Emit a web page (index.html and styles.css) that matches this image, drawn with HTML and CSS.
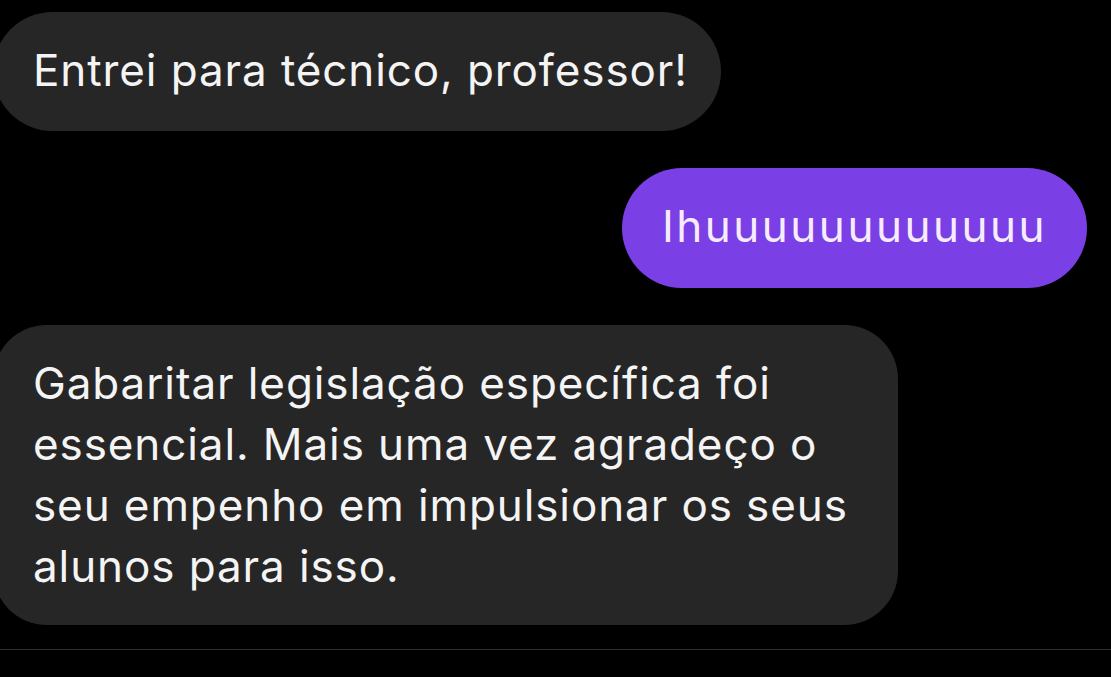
FILE: index.html
```html
<!DOCTYPE html>
<html lang="pt">
<head>
<meta charset="utf-8">
<link rel="stylesheet" href="styles.css">
</head>
<body>
<div class="chat">
  <div class="row in">
    <div class="bubble grey single">Entrei para técnico, professor!</div>
  </div>
  <div class="row out">
    <div class="bubble purple">Ihuuuuuuuuuuuu</div>
  </div>
  <div class="row in">
    <div class="bubble grey multi">Gabaritar legislação específica foi<br>essencial. Mais uma vez agradeço o<br>seu empenho em impulsionar os seus<br>alunos para isso.</div>
  </div>
</div>
<div class="divider"></div>
</body>
</html>
```

FILE: styles.css
```css
html, body {
  margin: 0;
  padding: 0;
  background: #000;
  height: 100%;
  overflow: hidden;
}
body {
  font-family: Inter, "Noto Sans", sans-serif;
  color: #f4f4f4;
}
.chat {
  display: flex;
  flex-direction: column;
  padding-top: 12px;
  gap: 37px;
}
.row {
  display: flex;
}
.row.in {
  justify-content: flex-start;
  margin-left: -7px;
}
.row.out {
  justify-content: flex-end;
  padding-right: 24px;
}
.bubble {
  font-size: 44px;
  letter-spacing: 0.9px;
  line-height: 61px;
  box-sizing: border-box;
  white-space: nowrap;
}
.grey {
  background: #262626;
}
.single {
  height: 119px;
  border-radius: 60px;
  padding: 28px 33px 0 40px;
}
.purple {
  background: #7a40e6;
  color: #f7ecff;
  height: 120px;
  border-radius: 60px;
  padding: 28px 40px 0 40px;
  letter-spacing: 2.5px;
}
.multi {
  width: 905px;
  height: 300px;
  border-radius: 54px;
  padding: 28px 40px 0 40px;
}
.divider {
  margin-top: 24px;
  height: 1px;
  background: #2e2e2e;
}
```
